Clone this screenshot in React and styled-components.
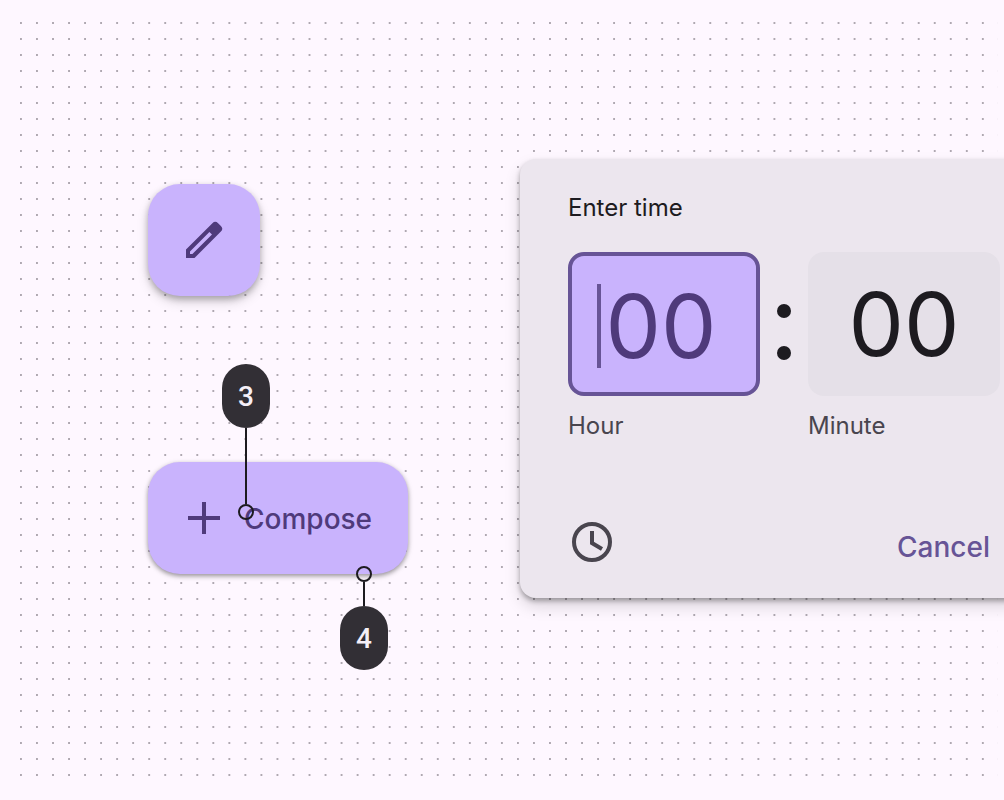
import React, { useState } from "react";
import styled, { createGlobalStyle } from "styled-components";

const color = {
  surface: "#fef7ff",
  dot: "#afa8b1",
  container: "#c9b3fd",
  onContainer: "#4f3a7b",
  primary: "#675496",
  panel: "#ece6ee",
  field: "#e5e0e8",
  ink: "#1d1b20",
  muted: "#49454e",
  callout: "#322f35",
};

const GlobalStyle = createGlobalStyle`
  *, *::before, *::after { box-sizing: border-box; }
  body {
    margin: 0;
    background: ${color.surface};
    font-family: Inter, "Liberation Sans", sans-serif;
    color: ${color.ink};
  }
  button, input { font: inherit; color: inherit; margin: 0; padding: 0; border: 0; background: none; }
  button { cursor: pointer; }
`;

const Canvas = styled.main`
  display: flex;
  align-items: flex-start;
  min-height: 100vh;
  overflow: hidden;
  position: relative;
`;

const DotGrid = styled.div`
  position: absolute;
  inset: 22px 6px 10px 20px;
  background: conic-gradient(at 2px 2px, transparent 75%, ${color.dot} 0) 0 0 / 16px 16px round;
`;

const Actions = styled.section`
  position: relative;
  flex: 0 0 520px;
  display: flex;
  flex-direction: column;
  align-items: flex-start;
  gap: 166px;
  padding: 184px 0 0 148px;
`;

const Fab = styled.button`
  position: relative;
  display: flex;
  align-items: center;
  gap: 24px;
  height: 112px;
  padding: 0 ${(p) => (p.$extended ? "36px 0 40px" : "32px")};
  border-radius: 32px;
  background: ${color.container};
  color: ${color.onContainer};
  font: 500 28px/40px Inter, sans-serif;
  box-shadow: ${(p) =>
    p.$extended
      ? "0 2px 4px rgba(0, 0, 0, 0.3), 0 2px 6px rgba(0, 0, 0, 0.15)"
      : "0 3px 6px rgba(0, 0, 0, 0.25), 0 6px 12px rgba(0, 0, 0, 0.15)"};
`;

const FabLabel = styled.span`
  padding-top: 2px;
`;

const FabAnchor = styled.div`
  position: relative;
`;

const Callout = styled.div`
  position: absolute;
  display: flex;
  flex-direction: ${(p) => (p.$below ? "column-reverse" : "column")};
  align-items: center;
  left: ${(p) => p.$left}px;
  ${(p) => (p.$below ? "top: 104px;" : "bottom: 54px;")}
`;

const Badge = styled.span`
  width: 48px;
  height: 64px;
  padding-top: 2px;
  border-radius: 24px;
  display: flex;
  align-items: center;
  justify-content: center;
  background: ${color.callout};
  color: #f5eff7;
  font: 500 28px/40px Roboto, sans-serif;
`;

const Stem = styled.span`
  width: 2px;
  height: ${(p) => p.$length}px;
  background: ${color.ink};
`;

const Ring = styled.span`
  width: 16px;
  height: 16px;
  border: 2px solid ${color.ink};
  border-radius: 50%;
`;

const Panel = styled.form`
  position: relative;
  flex: 1 0 508px;
  display: flex;
  flex-direction: column;
  margin: 159px -24px 0 0;
  padding: 31px 0 32px 48px;
  border-radius: 16px;
  background: ${color.panel};
  box-shadow: 0 3px 5px rgba(0, 0, 0, 0.3), 0 8px 16px rgba(0, 0, 0, 0.15);
`;

const Title = styled.h2`
  margin: 0 0 26px;
  font: 400 24px/36px Inter, sans-serif;
`;

const Fields = styled.div`
  display: flex;
  align-items: flex-start;
`;

const Field = styled.label`
  display: flex;
  flex-direction: column;
  gap: 12px;
  flex: 0 0 192px;
  font: 400 24px/36px Inter, sans-serif;
  color: ${color.muted};
`;

const FieldBox = styled.span`
  display: flex;
  align-items: center;
  justify-content: center;
  height: 144px;
  border-radius: 16px;
  border: 4px solid ${(p) => (p.$active ? color.primary : color.field)};
  background: ${(p) => (p.$active ? color.container : color.field)};
  color: ${(p) => (p.$active ? color.onContainer : color.ink)};
  padding: ${(p) => (p.$active ? "4px 10px 0 0" : "0")};
`;

const Caret = styled.span`
  width: 4px;
  height: 84px;
  background: ${color.primary};
`;

const Digits = styled.input`
  width: 120px;
  height: 104px;
  text-align: center;
  font: 400 88px/104px Inter, sans-serif;
  outline: none;
`;

const Colon = styled.span`
  flex: 0 0 48px;
  height: 144px;
  display: flex;
  flex-direction: column;
  align-items: center;
  justify-content: center;
  gap: 28px;
  padding-top: 16px;
`;

const ColonDot = styled.span`
  width: 14px;
  height: 14px;
  border-radius: 50%;
  background: ${color.ink};
`;

const Footer = styled.div`
  display: flex;
  align-items: flex-end;
  justify-content: space-between;
  margin-top: 74px;
  padding-right: 38px;
`;

const IconButton = styled.button`
  width: 48px;
  height: 48px;
  color: ${color.muted};
  svg { display: block; }
`;

const TextButton = styled.button`
  color: ${color.primary};
  font: 500 28px/38px Inter, sans-serif;
`;

const PencilIcon = () => (
  <svg width="48" height="48" viewBox="0 0 24 24" fill="currentColor" fillRule="evenodd" aria-hidden="true">
    <path d="M3 21v-4.25L16.2 3.58a2.05 2.05 0 0 1 2.85 0l1.4 1.4a2 2 0 0 1 0 2.82L7.25 21ZM5 19h1.2l9.8-9.7-1.3-1.3L5 17.7Z" />
  </svg>
);

const PlusIcon = () => (
  <svg width="32" height="32" viewBox="0 0 32 32" fill="currentColor" aria-hidden="true">
    <path d="M14 0h4v14h14v4H18v14h-4V18H0v-4h14Z" />
  </svg>
);

const ClockIcon = () => (
  <svg width="48" height="48" viewBox="0 0 48 48" fill="none" stroke="currentColor" strokeWidth="4" aria-hidden="true">
    <circle cx="24" cy="24" r="18" />
    <path d="M24 13v12l10 6" />
  </svg>
);

function NumberField({ label, active }) {
  const [value, setValue] = useState("00");
  return (
    <Field>
      <FieldBox $active={active}>
        {active && <Caret />}
        <Digits inputMode="numeric" maxLength={2} value={value} onChange={(e) => setValue(e.target.value)} />
      </FieldBox>
      {label}
    </Field>
  );
}

export default function App() {
  return (
    <>
      <GlobalStyle />
      <Canvas>
        <DotGrid />
        <Actions>
          <Fab type="button" aria-label="Compose">
            <PencilIcon />
          </Fab>
          <FabAnchor>
            <Fab type="button" $extended>
              <PlusIcon />
              <FabLabel>Compose</FabLabel>
            </Fab>
            <Callout $left={74}>
              <Badge>3</Badge>
              <Stem $length={76} />
              <Ring />
            </Callout>
            <Callout $left={192} $below>
              <Badge>4</Badge>
              <Stem $length={24} />
              <Ring />
            </Callout>
          </FabAnchor>
        </Actions>
        <Panel>
          <Title>Enter time</Title>
          <Fields>
            <NumberField label="Hour" active />
            <Colon>
              <ColonDot />
              <ColonDot />
            </Colon>
            <NumberField label="Minute" />
          </Fields>
          <Footer>
            <IconButton type="button" aria-label="Switch to clock">
              <ClockIcon />
            </IconButton>
            <TextButton type="button">Cancel</TextButton>
          </Footer>
        </Panel>
      </Canvas>
    </>
  );
}
